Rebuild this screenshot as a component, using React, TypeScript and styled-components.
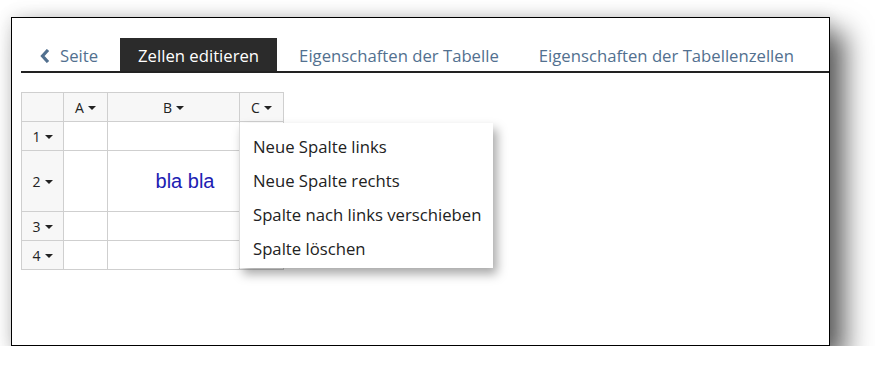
import React from "react";
import styled, { createGlobalStyle } from "styled-components";

const Global = createGlobalStyle`
  html, body { margin: 0; padding: 0; background: #fff; }
  body { font-family: "Open Sans", "Noto Sans", sans-serif; }
`;

const Frame = styled.div`
  box-sizing: border-box;
  margin: 17px 0 0 11px;
  width: 819px;
  height: 329px;
  border: 1px solid #000;
  background: #fff;
  padding: 20px 0 0 9px;
  box-shadow: 15px 15px 26px rgba(0, 0, 0, 0.62), 0 0 16px rgba(0, 0, 0, 0.14);
`;

const TabBar = styled.div`
  display: flex;
  height: 33px;
  border-bottom: 2px solid #222;
  gap: 4px;
`;

const Tab = styled.div<{ $active?: boolean; $back?: boolean }>`
  box-sizing: border-box;
  height: 33px;
  display: flex;
  align-items: center;
  gap: 10px;
  padding: 3px 18px 0 ${(p) => (p.$back ? "19px" : "18px")};
  font-size: 16.7px;
  line-height: 30px;
  color: ${(p) => (p.$active ? "#fff" : "#52708f")};
  background: ${(p) => (p.$active ? "#2b2b2b" : "transparent")};
  white-space: nowrap;
`;

const TableWrap = styled.div`
  position: relative;
  margin-top: 19px;
  width: max-content;
`;

const Grid = styled.table`
  border-collapse: collapse;
  font-size: 14px;
  color: #222;
  td, th {
    border: 1px solid #cfcfcf;
    padding: 0;
    text-align: center;
    font-weight: normal;
  }
`;

const HeadCell = styled.th<{ $w: number }>`
  width: ${(p) => p.$w}px;
  height: 29px;
  box-sizing: border-box;
  background: #f7f7f7;
`;

const RowHead = styled.th<{ $h: number }>`
  height: ${(p) => p.$h}px;
  box-sizing: border-box;
  background: #f7f7f7;
`;

const Cell = styled.td<{ $shift?: boolean }>`
  background: #fff;
  padding-left: ${(p) => (p.$shift ? "23px" : "0")} !important;
`;

const Caret = styled.span`
  display: inline-block;
  width: 0;
  height: 0;
  margin-left: 4px;
  vertical-align: middle;
  border-top: 4px solid #222;
  border-left: 4px solid transparent;
  border-right: 4px solid transparent;
  position: relative;
  top: -1px;
`;

const Content = styled.span`
  font-family: "Liberation Sans", Arial, sans-serif;
  font-size: 20px;
  color: #2020b2;
`;

const Menu = styled.ul`
  position: absolute;
  top: 31px;
  left: 218px;
  width: 254px;
  margin: 0;
  padding: 7px 0 2px;
  list-style: none;
  background: #fff;
  border-left: 1px solid #ddd;
  box-sizing: border-box;
  box-shadow: 4px 6px 10px rgba(0, 0, 0, 0.35);
`;

const MenuItem = styled.li`
  padding: 0 13px;
  height: 34px;
  line-height: 34px;
  font-size: 16.7px;
  color: #222;
  white-space: nowrap;
`;

const Chevron = () => (
  <svg width="10" height="14" viewBox="0 0 10 14">
    <path d="M8 1 L2.5 7 L8 13" fill="none" stroke="#52708f" strokeWidth="3.2" strokeLinejoin="miter" />
  </svg>
);

const rows: { n: number; h: number; content?: string }[] = [
  { n: 1, h: 29 },
  { n: 2, h: 61, content: "bla bla" },
  { n: 3, h: 29 },
  { n: 4, h: 29 },
];

export default function App() {
  return (
    <>
      <Global />
      <Frame>
        <TabBar>
          <Tab $back>
            <Chevron />
            Seite
          </Tab>
          <Tab $active>Zellen editieren</Tab>
          <Tab>Eigenschaften der Tabelle</Tab>
          <Tab>Eigenschaften der Tabellenzellen</Tab>
        </TabBar>
        <TableWrap>
          <Grid>
            <thead>
              <tr>
                <HeadCell $w={42} />
                <HeadCell $w={44}>
                  A<Caret />
                </HeadCell>
                <HeadCell $w={132}>
                  B<Caret />
                </HeadCell>
                <HeadCell $w={44}>
                  C<Caret />
                </HeadCell>
              </tr>
            </thead>
            <tbody>
              {rows.map((r) => (
                <tr key={r.n}>
                  <RowHead $h={r.h}>
                    {r.n}
                    <Caret />
                  </RowHead>
                  <Cell />
                  <Cell $shift={!!r.content}>{r.content && <Content>{r.content}</Content>}</Cell>
                  <Cell />
                </tr>
              ))}
            </tbody>
          </Grid>
          <Menu>
            <MenuItem>Neue Spalte links</MenuItem>
            <MenuItem>Neue Spalte rechts</MenuItem>
            <MenuItem>Spalte nach links verschieben</MenuItem>
            <MenuItem>Spalte löschen</MenuItem>
          </Menu>
        </TableWrap>
      </Frame>
    </>
  );
}
